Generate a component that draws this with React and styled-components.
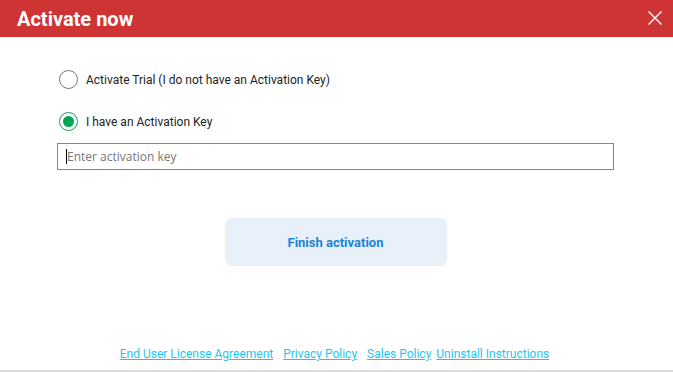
import React, { useState } from 'react';
import styled, { createGlobalStyle } from 'styled-components';

const GlobalStyle = createGlobalStyle`
  html, body {
    margin: 0;
    padding: 0;
    background: #fff;
    font-family: Roboto, "Liberation Sans", sans-serif;
  }
`;

const Window = styled.div`
  width: 673px;
  height: 372px;
  box-sizing: border-box;
  display: flex;
  flex-direction: column;
  background: #fff;
  border-bottom: 2px solid #dcdcdc;
`;

const Header = styled.div`
  height: 37px;
  flex-shrink: 0;
  background: #cf3434;
  display: flex;
  align-items: center;
  justify-content: space-between;
  padding: 0 10px 0 17px;
`;

const Title = styled.h1`
  margin: 0;
  color: #fff;
  font-size: 20px;
  font-weight: 700;
`;

const CloseButton = styled.button`
  border: 0;
  background: none;
  padding: 0;
  width: 16px;
  height: 16px;
  display: flex;
  cursor: pointer;
  margin-top: -2px;
`;

const Body = styled.div`
  flex: 1;
  display: flex;
  flex-direction: column;
  padding: 33px 59px 0 57px;
`;

const Options = styled.div`
  display: flex;
  flex-direction: column;
  gap: 23px;
  padding-left: 2px;
`;

const Option = styled.label`
  display: flex;
  align-items: center;
  gap: 8px;
  height: 19px;
  font-size: 12px;
  color: #222;
  cursor: pointer;
`;

const Radio = styled.span`
  width: 19px;
  height: 19px;
  box-sizing: border-box;
  border-radius: 50%;
  border: 1.5px solid ${(p) => (p.checked ? '#00a651' : '#777')};
  display: flex;
  align-items: center;
  justify-content: center;

  &::after {
    content: '';
    width: 11px;
    height: 11px;
    border-radius: 50%;
    background: ${(p) => (p.checked ? '#00a651' : 'transparent')};
  }
`;

const KeyField = styled.div`
  margin-top: 12px;
  height: 27px;
  box-sizing: border-box;
  border: 1px solid #4a95e0;
  display: flex;
  align-items: center;
  padding-left: 8px;
`;

const Caret = styled.span`
  width: 1px;
  height: 15px;
  background: #000;
  flex-shrink: 0;
`;

const KeyInput = styled.input`
  flex: 1;
  min-width: 0;
  height: 100%;
  border: 0;
  padding: 0;
  font-family: "Open Sans", "Noto Sans", sans-serif;
  font-size: 12px;
  color: #222;
  background: transparent;
  outline: none;

  &::placeholder {
    color: #777;
  }
`;

const Actions = styled.div`
  display: flex;
  justify-content: center;
  margin-top: 48px;
`;

const PrimaryButton = styled.button`
  width: 222px;
  height: 48px;
  border: 0;
  border-radius: 7px;
  background: #e8f1f9;
  color: #1a84d6;
  font-family: Roboto, "Liberation Sans", sans-serif;
  font-size: 13px;
  font-weight: 700;
  cursor: pointer;
`;

const Footer = styled.div`
  margin-top: auto;
  height: 23px;
  display: flex;
  justify-content: center;
  gap: 10px;
  padding-right: 4px;
`;

const FooterLink = styled.a`
  color: #1ec6ef;
  font-size: 12px;
  text-decoration: underline;
  margin-right: ${(p) => (p.tight ? '-5px' : '0')};
`;

export default function App() {
  const [choice, setChoice] = useState('key');
  const [key, setKey] = useState('');

  return (
    <>
      <GlobalStyle />
      <Window>
        <Header>
          <Title>Activate now</Title>
          <CloseButton aria-label="Close">
            <svg width="16" height="16" viewBox="0 0 16 16">
              <path d="M1.5 1.5 L14.5 14.5 M14.5 1.5 L1.5 14.5" stroke="#fff" strokeWidth="1.4" />
            </svg>
          </CloseButton>
        </Header>
        <Body>
          <Options>
            <Option onClick={() => setChoice('trial')}>
              <Radio checked={choice === 'trial'} />
              Activate Trial (I do not have an Activation Key)
            </Option>
            <Option onClick={() => setChoice('key')}>
              <Radio checked={choice === 'key'} />
              I have an Activation Key
            </Option>
          </Options>
          <KeyField>
            {key === '' && <Caret />}
            <KeyInput
              placeholder="Enter activation key"
              value={key}
              onChange={(e) => setKey(e.target.value)}
            />
          </KeyField>
          <Actions>
            <PrimaryButton>Finish activation</PrimaryButton>
          </Actions>
        </Body>
        <Footer>
          <FooterLink href="#">End User License Agreement</FooterLink>
          <FooterLink href="#">Privacy Policy</FooterLink>
          <FooterLink href="#" tight>Sales Policy</FooterLink>
          <FooterLink href="#">Uninstall Instructions</FooterLink>
        </Footer>
      </Window>
    </>
  );
}
